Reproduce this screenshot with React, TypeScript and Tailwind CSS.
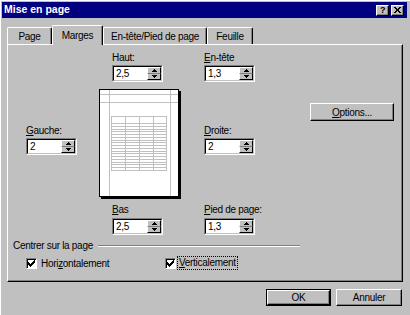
import { ReactNode } from "react";

const raised =
  "bg-[#c0c0c0] border border-t-white border-l-white border-b-black border-r-black shadow-[inset_-1px_-1px_0_#808080]";

const Label = ({ children, className = "" }: { children: ReactNode; className?: string }) => (
  <div className={"h-[12px] leading-[12px] whitespace-nowrap " + className}>{children}</div>
);

const Arrow = ({ up }: { up?: boolean }) => (
  <svg width="5" height="3" viewBox="0 0 5 3" shapeRendering="crispEdges">
    {up ? <path d="M2 0h1v1h1v1h1v1H0V2h1V1h1z" fill="#000" /> : <path d="M0 0h5v1H4v1H3v1H2V2H1V1H0z" fill="#000" />}
  </svg>
);

const Spin = ({ value, className = "" }: { value: string; className?: string }) => (
  <div
    className={
      "flex h-[17px] w-[51px] border border-t-[#808080] border-l-[#808080] border-b-white border-r-white " +
      className
    }
  >
    <div className="flex flex-1 border border-t-black border-l-black border-b-[#c0c0c0] border-r-[#c0c0c0] bg-white">
      <span className="flex-1 pl-[2px] leading-[13px]">{value}</span>
      <div className="flex w-[14px] flex-col">
        <div className="flex h-[7px] items-center justify-center border-t border-l border-t-white border-l-white border-r border-b border-r-black border-b-[#808080] bg-[#c0c0c0]">
          <Arrow up />
        </div>
        <div className="flex h-[6px] items-center justify-center border-l border-l-white border-r border-b border-r-black border-b-black bg-[#c0c0c0]">
          <Arrow />
        </div>
      </div>
    </div>
  </div>
);

const Check = () => (
  <div className="flex h-[11px] w-[11px] items-center justify-center border border-t-[#808080] border-l-[#808080] border-b-white border-r-white bg-white shadow-[inset_1px_1px_0_#000]">
    <svg width="7" height="7" viewBox="0 0 7 7" shapeRendering="crispEdges">
      <path d="M6 0h1v3H6v1H5v1H4v1H3v1H2V6H1V5H0V2h1v1h1v1h1V3h1V2h1V1h1z" fill="#000" />
    </svg>
  </div>
);

const PagePreview = () => {
  const rows = [] as number[];
  for (let i = 0; i < 18; i++) rows.push(34 + Math.round(i * 2.75));
  return (
    <svg width="82" height="110" viewBox="0 0 82 110" shapeRendering="crispEdges">
      <rect x="2" y="2" width="80" height="108" fill="#000" />
      <rect x="0.5" y="0.5" width="79" height="107" fill="#fff" stroke="#000" />
      <g stroke="#c0c0c0" fill="none">
        <line x1="10.5" y1="1" x2="10.5" y2="107" />
        <line x1="71.5" y1="1" x2="71.5" y2="107" />
        <line x1="1" y1="5.5" x2="79" y2="5.5" />
        <line x1="1" y1="13.5" x2="79" y2="13.5" />
        <rect x="12.5" y="27.5" width="55" height="54" />
        <line x1="26.5" y1="28" x2="26.5" y2="81" />
        <line x1="40.5" y1="28" x2="40.5" y2="81" />
        <line x1="54.5" y1="28" x2="54.5" y2="81" />
        {rows.map((y) => (
          <line key={y} x1="13" y1={y + 0.5} x2="67" y2={y + 0.5} />
        ))}
      </g>
    </svg>
  );
};

const Tab = ({ label, width, active }: { label: string; width: string; active?: boolean }) => (
  <div
    className={
      "flex items-center justify-center rounded-t-[2px] border-l border-t border-r border-l-white border-t-white border-r-black bg-[#c0c0c0] shadow-[inset_-1px_0_0_#808080] " +
      width +
      (active ? " relative z-10 -mb-px h-[20px]" : " h-[17px]")
    }
  >
    {label}
  </div>
);

export default function App() {
  return (
    <div className="h-[315px] w-[410px] overflow-hidden bg-[#c0c0c0] pt-[2px] font-['Liberation_Sans',Arial,sans-serif] text-[10px] tracking-[-0.3px] text-black shadow-[inset_1px_1px_0_#fff]">
      {/* barre de titre */}
      <div className="ml-[2px] flex h-[16px] w-[405px] items-center bg-[#000080] pl-[2px] pr-[3px]">
        <span className="flex-1 text-[10.5px] font-bold tracking-normal text-white">Mise en page</span>
        <div className={"flex h-[11px] w-[13px] items-center justify-center text-[9px] font-bold leading-none " + raised}>
          ?
        </div>
        <div className={"ml-[2px] flex h-[11px] w-[13px] items-center justify-center " + raised}>
          <svg width="7" height="6" viewBox="0 0 7 6" shapeRendering="crispEdges">
            <path d="M0 0h2v1h1v1h1V1h1V0h2v1H6v1H5v2h1v1h1v1H5V5H4V4H3v1H2v1H0V5h1V4h1V2H1V1H0z" fill="#000" />
          </svg>
        </div>
      </div>

      {/* onglets */}
      <div className="flex h-[26px] items-end pl-[7px]">
        <Tab label="Page" width="w-[45px]" />
        <Tab label="Marges" width="w-[51px]" active />
        <Tab label="En-tête/Pied de page" width="w-[104px]" />
        <Tab label="Feuille" width="w-[46px]" />
      </div>

      {/* panneau */}
      <div className="ml-[7px] h-[238px] w-[396px] border border-l-white border-t-white border-r-black border-b-black shadow-[inset_-1px_-1px_0_#808080]">
        <div className="flex pl-[18px] pt-[7px]">
          <div className="flex w-[51px] flex-col pt-[73px]">
            <Label>
              <u>G</u>auche:
            </Label>
            <Spin value="2" className="mt-[1px]" />
          </div>

          <div className="ml-[22px] flex w-[82px] flex-col">
            <div className="pl-[13px]">
              <Label>Haut:</Label>
              <Spin value="2,5" className="mt-[1px]" />
            </div>
            <div className="mt-[7px]">
              <PagePreview />
            </div>
            <div className="mt-[5px] pl-[13px]">
              <Label>
                <u>B</u>as
              </Label>
              <Spin value="2,5" className="mt-[2px]" />
            </div>
          </div>

          <div className="ml-[23px] flex w-[190px] flex-col items-start">
            <Label>
              <u>E</u>n-tête
            </Label>
            <Spin value="1,3" className="mt-[1px]" />
            <div className={"mt-[21px] flex h-[18px] w-[84px] items-center justify-center self-end " + raised}>
              <span>
                <u>O</u>ptions...
              </span>
            </div>
            <Label className="mt-[4px]">
              <u>D</u>roite:
            </Label>
            <Spin value="2" className="mt-[1px]" />
            <Label className="mt-[49px]">
              <u>P</u>ied de page:
            </Label>
            <Spin value="1,3" className="mt-[2px]" />
          </div>
        </div>

        <div className="mt-[5px] flex h-[12px] items-center pl-[5px]">
          <span className="leading-[12px]">Centrer sur la page</span>
          <div className="ml-[5px] h-[2px] w-[202px] border-t border-b border-t-[#808080] border-b-white" />
        </div>

        <div className="mt-[4px] flex h-[14px] items-center pl-[18px]">
          <div className="flex w-[139px] items-center gap-[4px]">
            <Check />
            <span>
              Hori<u>z</u>ontalement
            </span>
          </div>
          <Check />
          <span className="ml-[1px] border border-dotted border-black px-[1px] leading-[12px]">
            <u>V</u>erticalement
          </span>
        </div>
      </div>

      {/* boutons */}
      <div className="mt-[7px] flex justify-end gap-[5px] pr-[8px]">
        <div className="flex h-[17px] w-[65px] border border-black">
          <div className={"flex flex-1 items-center justify-center " + raised}>OK</div>
        </div>
        <div className={"flex h-[17px] w-[66px] items-center justify-center " + raised}>Annuler</div>
      </div>
    </div>
  );
}
